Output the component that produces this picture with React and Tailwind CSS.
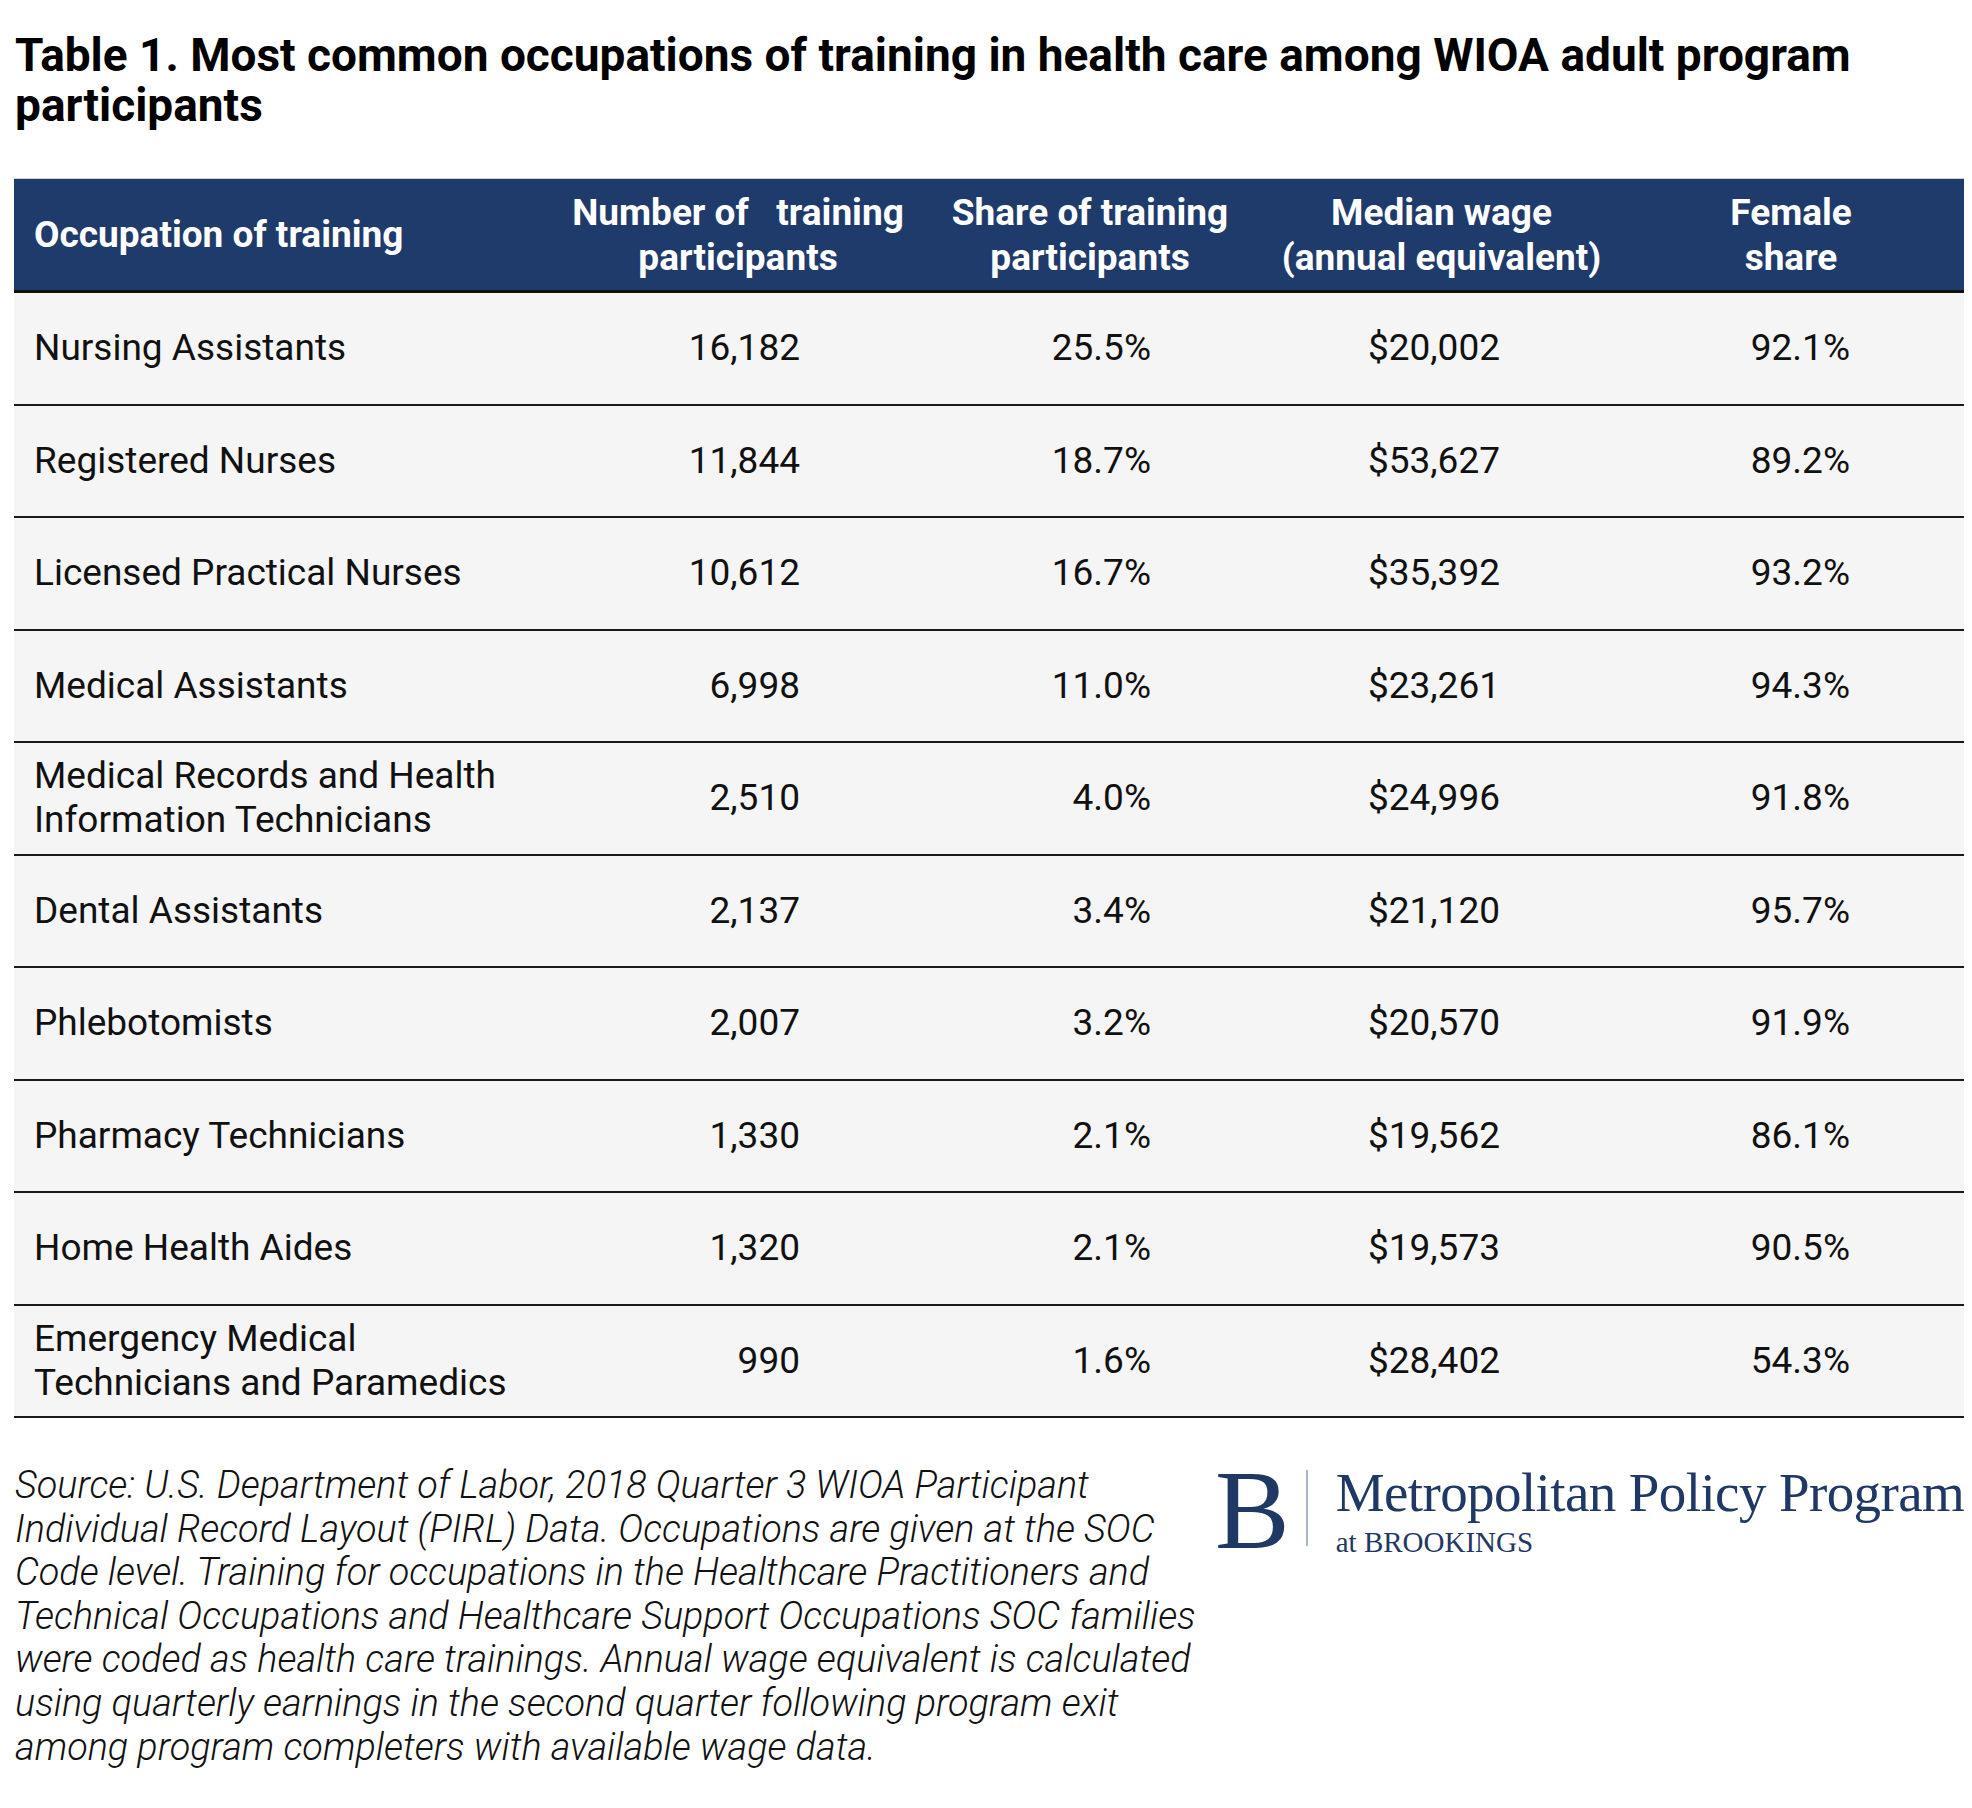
import React from 'react';

const ROWS = [
  ['Nursing Assistants', '16,182', '25.5%', '$20,002', '92.1%'],
  ['Registered Nurses', '11,844', '18.7%', '$53,627', '89.2%'],
  ['Licensed Practical Nurses', '10,612', '16.7%', '$35,392', '93.2%'],
  ['Medical Assistants', '6,998', '11.0%', '$23,261', '94.3%'],
  ['Medical Records and Health Information Technicians', '2,510', '4.0%', '$24,996', '91.8%'],
  ['Dental Assistants', '2,137', '3.4%', '$21,120', '95.7%'],
  ['Phlebotomists', '2,007', '3.2%', '$20,570', '91.9%'],
  ['Pharmacy Technicians', '1,330', '2.1%', '$19,562', '86.1%'],
  ['Home Health Aides', '1,320', '2.1%', '$19,573', '90.5%'],
  ['Emergency Medical Technicians and Paramedics', '990', '1.6%', '$28,402', '54.3%'],
];

const COLS = 'grid grid-cols-[547px_354px_350px_353px_346px]';

export default function App() {
  return (
    <div className="w-[1972px] h-[1808px] bg-white pt-[30px] font-['Roboto',sans-serif] text-[#111]">
      <h1 className="pl-[15px] text-[46px] leading-[50px] font-bold text-black w-[1940px]">
        Table 1. Most common occupations of training in health care among WIOA adult program participants
      </h1>

      <div className="ml-[14px] w-[1950px] mt-[48px]">
        <div className={`${COLS} h-[115px] bg-[#1f3b6b] border-t border-t-[#cfcfcf] border-b-[3px] border-b-[#111] text-white font-bold text-[37px] leading-[45px]`}>
          <div className="flex items-center pl-[20px]">Occupation of training</div>
          <div className="flex items-center justify-center text-center">Number of&nbsp;&nbsp; training<br />participants</div>
          <div className="flex items-center justify-center text-center">Share of training<br />participants</div>
          <div className="flex items-center justify-center text-center">Median wage<br />(annual equivalent)</div>
          <div className="flex items-center justify-center text-center">Female<br />share</div>
        </div>

        {ROWS.map(([name, num, share, wage, female]) => (
          <div key={name} className={`${COLS} h-[112.5px] bg-[#f5f5f5] border-b-2 border-b-[#1a1a1a] text-[37px] leading-[44px]`}>
            <div className="flex items-center pl-[20px] pr-[30px]">{name}</div>
            <div className="flex items-center justify-end pr-[115px]">{num}</div>
            <div className="flex items-center justify-end pr-[114px]">{share}</div>
            <div className="flex items-center justify-end pr-[118px]">{wage}</div>
            <div className="flex items-center justify-end pr-[114px]">{female}</div>
          </div>
        ))}
      </div>

      <div className="flex mt-[46px]">
        <p className="pl-[15px] w-[1215px] shrink-0 italic font-light text-[37.8px] leading-[43.6px] text-[#111]">
          Source: U.S. Department of Labor, 2018 Quarter 3 WIOA Participant Individual Record Layout (PIRL) Data. Occupations are given at the SOC Code level. Training for occupations in the Healthcare Practitioners and Technical Occupations and Healthcare Support Occupations SOC families were coded as health care trainings. Annual wage equivalent is calculated using quarterly earnings in the second quarter following program exit among program completers with available wage data.
        </p>

        <div className="mt-[4px] flex items-start text-[#1f3864] font-['Liberation_Serif',serif]">
          <div className="text-[112px] leading-[80px] h-[80px] pt-[2px]">B</div>
          <div className="w-[2px] h-[76px] bg-[#aab6c9] ml-[16px] mt-[2px]" />
          <div className="ml-[28px] flex flex-col">
            <div className="text-[55px] leading-[50px] tracking-[-0.6px]">Metropolitan Policy Program</div>
            <div className="text-[29px] leading-[30px] mt-[9px]">at BROOKINGS</div>
          </div>
        </div>
      </div>
    </div>
  );
}
